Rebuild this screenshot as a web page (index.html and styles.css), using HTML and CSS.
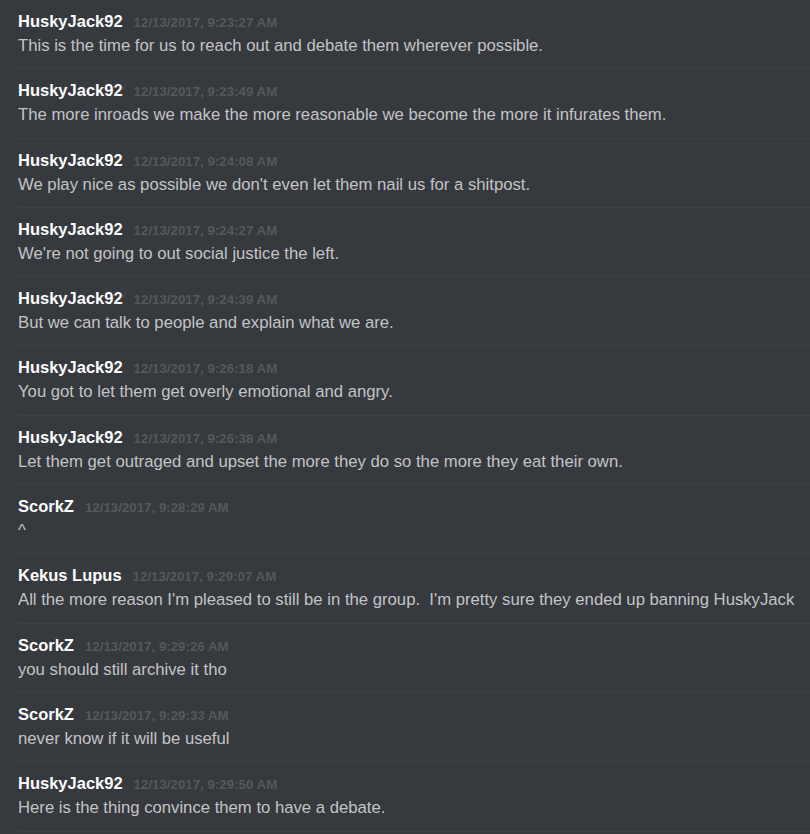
FILE: index.html
```html
<!DOCTYPE html>
<html>
<head>
<meta charset="utf-8">
<link rel="stylesheet" href="styles.css">
</head>
<body>
<div class="chat">
  <div class="msg"><div class="head"><span class="name">HuskyJack92</span><span class="time">12/13/2017, 9:23:27 AM</span></div><div class="text">This is the time for us to reach out and debate them wherever possible.</div></div>
  <div class="msg"><div class="head"><span class="name">HuskyJack92</span><span class="time">12/13/2017, 9:23:49 AM</span></div><div class="text">The more inroads we make the more reasonable we become the more it infurates them.</div></div>
  <div class="msg"><div class="head"><span class="name">HuskyJack92</span><span class="time">12/13/2017, 9:24:08 AM</span></div><div class="text">We play nice as possible we don't even let them nail us for a shitpost.</div></div>
  <div class="msg"><div class="head"><span class="name">HuskyJack92</span><span class="time">12/13/2017, 9:24:27 AM</span></div><div class="text">We're not going to out social justice the left.</div></div>
  <div class="msg"><div class="head"><span class="name">HuskyJack92</span><span class="time">12/13/2017, 9:24:39 AM</span></div><div class="text">But we can talk to people and explain what we are.</div></div>
  <div class="msg"><div class="head"><span class="name">HuskyJack92</span><span class="time">12/13/2017, 9:26:18 AM</span></div><div class="text">You got to let them get overly emotional and angry.</div></div>
  <div class="msg"><div class="head"><span class="name">HuskyJack92</span><span class="time">12/13/2017, 9:26:38 AM</span></div><div class="text">Let them get outraged and upset the more they do so the more they eat their own.</div></div>
  <div class="msg"><div class="head"><span class="name">ScorkZ</span><span class="time">12/13/2017, 9:28:29 AM</span></div><div class="text">^</div></div>
  <div class="msg"><div class="head"><span class="name">Kekus Lupus</span><span class="time">12/13/2017, 9:29:07 AM</span></div><div class="text">All the more reason I'm pleased to still be in the group.&nbsp; I'm pretty sure they ended up banning HuskyJack</div></div>
  <div class="msg"><div class="head"><span class="name">ScorkZ</span><span class="time">12/13/2017, 9:29:26 AM</span></div><div class="text">you should still archive it tho</div></div>
  <div class="msg"><div class="head"><span class="name">ScorkZ</span><span class="time">12/13/2017, 9:29:33 AM</span></div><div class="text">never know if it will be useful</div></div>
  <div class="msg"><div class="head"><span class="name">HuskyJack92</span><span class="time">12/13/2017, 9:29:50 AM</span></div><div class="text">Here is the thing convince them to have a debate.</div></div>
</div>
</body>
</html>
```
FILE: styles.css
```css
html, body {
  margin: 0;
  padding: 0;
  background: #36393e;
}
body {
  width: 810px;
  height: 834px;
  overflow: hidden;
  font-family: "Liberation Sans", Arial, sans-serif;
}
.chat {
  display: flex;
  flex-direction: column;
  padding-left: 18px;
}
.msg {
  display: flex;
  flex-direction: column;
  height: 69.3px;
  box-sizing: border-box;
  padding-top: 10px;
  border-bottom: 1px solid #3e4146;
  white-space: nowrap;
}
.head {
  display: flex;
  align-items: baseline;
  gap: 11px;
  line-height: 22px;
}
.name {
  color: #ffffff;
  font-weight: bold;
  font-size: 16.5px;
}
.time {
  color: #55585d;
  font-weight: bold;
  font-size: 13.3px;
}
.text {
  color: #c3c4c6;
  font-size: 16.7px;
  line-height: 24px;
}
```
